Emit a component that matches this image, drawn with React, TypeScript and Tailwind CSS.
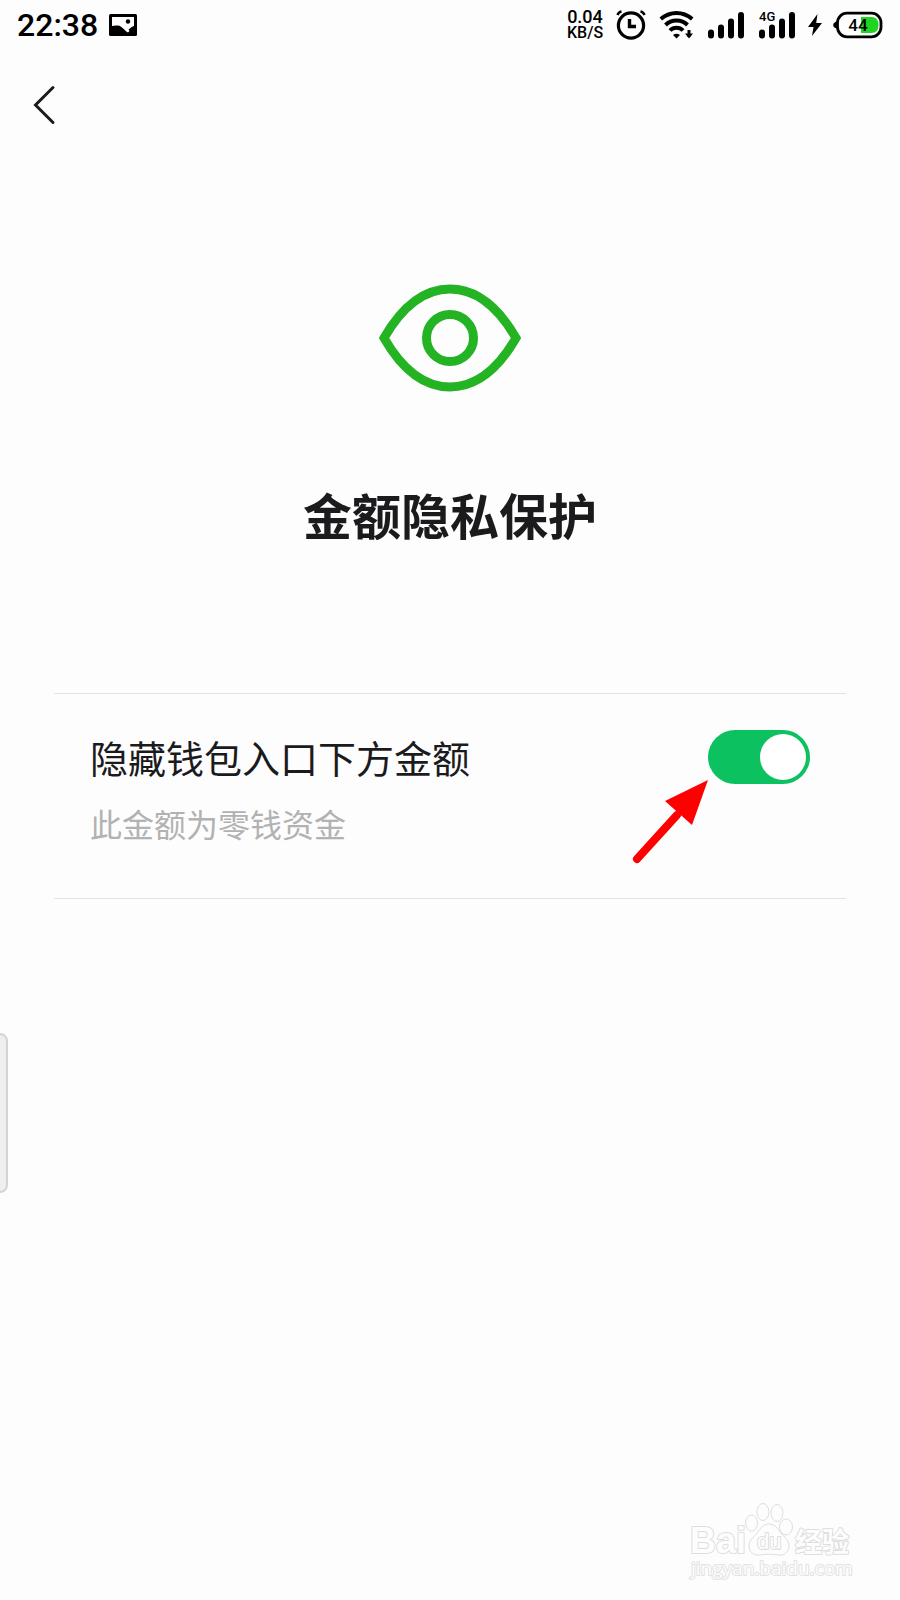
import React, { useState } from 'react';

const SignalIcon = () => (
    <svg width="36" height="27" viewBox="0 0 36 27" stroke="#000" strokeWidth="6" strokeLinecap="round">
        <path d="M3 20.5v3M13 15.5v8M23 9.5v14M33 3v20.5" />
    </svg>
);

const StatusBar: React.FC = () => (
    <header className="flex h-[50px] items-center justify-between pl-[17px] pr-4 text-black">
        <div className="flex items-center gap-[11px] font-[Roboto,sans-serif]">
            <span className="text-[32px] leading-8 font-medium">22:38</span>
            <svg width="28" height="22" viewBox="0 0 28 22">
                <rect x="0" y="0" width="28" height="22" rx="1.500" fill="#000" />
                <path d="M3 3h22v9q-2 .5-3.500 2l-2 1.500 1 1.500-1.500 1.500C15.500 16.500 13 12 9 11.500Q5 11.300 3 12z" fill="#fff" />
                <circle cx="19" cy="7.500" r="2.200" fill="#000" />
            </svg>
        </div>

        <div className="flex items-center">
            <div className="flex w-9 flex-col items-center font-[Roboto,sans-serif] font-medium">
                <span className="text-[18px] leading-4">0.04</span>
                <span className="text-[16px] leading-4">KB/S</span>
            </div>

            {/* Alarm */}
            <svg className="ml-[13px]" width="30" height="30" viewBox="0 0 30 30" fill="none" stroke="#000">
                <circle cx="15" cy="15.500" r="12.600" strokeWidth="3.200" />
                <path d="M13.500 9v7.500H20" strokeWidth="3.400" />
                <path d="M1.500 5q1-3 4-3.500M28.500 5q-1-3-4-3.500" strokeWidth="2.500" />
            </svg>

            {/* Wifi */}
            <svg className="ml-[13px]" width="36" height="30" viewBox="0 0 36 30" fill="none" stroke="#000" strokeWidth="4">
                <path d="M1.800 9Q9 3 17.500 3t15.700 6" />
                <path d="M6.500 15Q11 10.600 17.500 10.600T28.500 15" />
                <path d="M11 20.500q2.500-2.700 6.500-2.700t6.500 2.700" />
                <path d="M14 25q3.500-2.600 7 0l-3.500 3.500z" fill="#000" stroke="none" />
                <path d="M30 20v7" strokeWidth="3" />
                <path d="M26 23.500h8L30 28.500z" fill="#000" stroke="none" />
            </svg>

            <div className="ml-[13px]">
                <SignalIcon />
            </div>
            <div className="relative ml-[15px]">
                <SignalIcon />
                <span className="absolute -top-px left-0 font-[Roboto,sans-serif] text-[13px] leading-3 font-medium">4G</span>
            </div>

            {/* Charging */}
            <svg className="ml-3" width="16" height="24" viewBox="0 0 16 24">
                <path d="M10.500 1 1 14h5.500L5 23 15 10H9.200z" fill="#000" />
            </svg>

            <svg className="ml-[9px]" width="52" height="28" viewBox="0 0 52 28">
                <path d="M5 10.500v7Q1.200 16.500 1.200 14T5 10.500z" fill="#000" />
                <rect x="5.500" y="2.200" width="43.500" height="23.600" rx="9.500" fill="#fff" stroke="#000" strokeWidth="2.800" />
                <path d="M29 6h10.500q7 0 7 8t-7 8H29z" fill="#22d422" />
                <text x="26" y="20" textAnchor="middle" fontSize="17" fontWeight="500" fontFamily="Roboto, sans-serif" fill="#000">
                    44
                </text>
            </svg>
        </div>
    </header>
);

const EyeIcon = () => (
    <svg width="142" height="108" viewBox="0 0 142 108" fill="none" stroke="#23b323" strokeWidth="9">
        <path d="M5 54C24 21 46 5 71 5s47 16 66 49c-19 33-41 49-66 49S24 87 5 54z" />
        <circle cx="71" cy="54" r="23.500" />
    </svg>
);

const Watermark = () => (
    <svg
        className="pointer-events-none absolute right-[42px] bottom-3"
        width="170"
        height="90"
        viewBox="0 0 170 90"
        fill="#fdfdfd"
        stroke="#dedede"
        strokeWidth="1"
        fontFamily='"Liberation Sans", "Noto Sans CJK SC", sans-serif'
    >
        <ellipse cx="75" cy="14" rx="6" ry="8.500" />
        <ellipse cx="89" cy="15" rx="6" ry="8.500" />
        <ellipse cx="63.500" cy="25" rx="6" ry="8" />
        <ellipse cx="98" cy="29" rx="6.500" ry="8" />
        <path d="M81 26c6 0 9 5 12 9s8 7 8 13-5 10-11 9-12-1-18 0-11-3-11-9 5-9 8-13 6-9 12-9z" />
        <g strokeWidth="2" strokeLinejoin="round" paintOrder="stroke">
            <text x="2" y="55" fontSize="36" fontWeight="700">Bai</text>
            <text x="69" y="51" fontSize="22">du</text>
            <text x="107" y="54" fontSize="27" fontWeight="700">经验</text>
            <text x="3" y="77" fontSize="19" stroke="#e2e2e2" fontFamily='"Open Sans", sans-serif'>jingyan.baidu.com</text>
        </g>
    </svg>
);

export default function App() {
    const [hidden, setHidden] = useState(true);

    return (
        <div className="relative flex min-h-screen flex-col overflow-hidden bg-[#fdfdfd] font-['Noto_Sans_CJK_SC',sans-serif] text-[#1b1a1c]">
            <StatusBar />

            <nav className="px-6 pt-7">
                <button type="button" aria-label="返回" className="flex h-[54px] w-10 items-center pl-2">
                    <svg width="24" height="40" viewBox="0 0 24 40" fill="none" stroke="#1b1a1c" strokeWidth="3" strokeLinecap="round">
                        <path d="M21 2.500 3.500 20 21 37.500" />
                    </svg>
                </button>
            </nav>

            <main className="px-[54px]">
                <div className="flex flex-col items-center pt-[152px]">
                    <EyeIcon />
                    <h1 className="mt-[86px] text-[49px] leading-[72px] font-bold">金额隐私保护</h1>
                </div>

                <section className="relative mt-[143px] flex items-start justify-between border-y border-[#e2e2e2] pt-9 pr-9 pb-12 pl-9">
                    <div>
                        <label htmlFor="hide-amount" className="block text-[38px] leading-[54px]">
                            隐藏钱包入口下方金额
                        </label>
                        <p className="mt-3 text-[32px] leading-[54px] text-[#b2b2b2]">此金额为零钱资金</p>
                    </div>
                    <input
                        id="hide-amount"
                        type="checkbox"
                        role="switch"
                        checked={hidden}
                        onChange={e => setHidden(e.target.checked)}
                        className="flex h-[54px] w-[102px] shrink-0 cursor-pointer appearance-none items-center rounded-full bg-gray-300 p-1 before:size-[46px] before:rounded-full before:bg-white checked:justify-end checked:bg-[#0bc160]"
                    />

                    {/* Pointer to the switch */}
                    <svg className="pointer-events-none absolute top-[86px] right-[138px]" width="78" height="86" viewBox="0 0 78 86">
                        <path d="M7 79 47 35" stroke="#f00" strokeWidth="8" strokeLinecap="round" />
                        <path d="M78 0 35 21l27 24z" fill="#f00" />
                    </svg>
                </section>
            </main>

            {/* Edge handle */}
            <div className="absolute top-[1033px] -left-2 h-40 w-4 rounded-lg border-2 border-[#d4d3d5] bg-[#efeef0]" />

            <Watermark />
        </div>
    );
}
